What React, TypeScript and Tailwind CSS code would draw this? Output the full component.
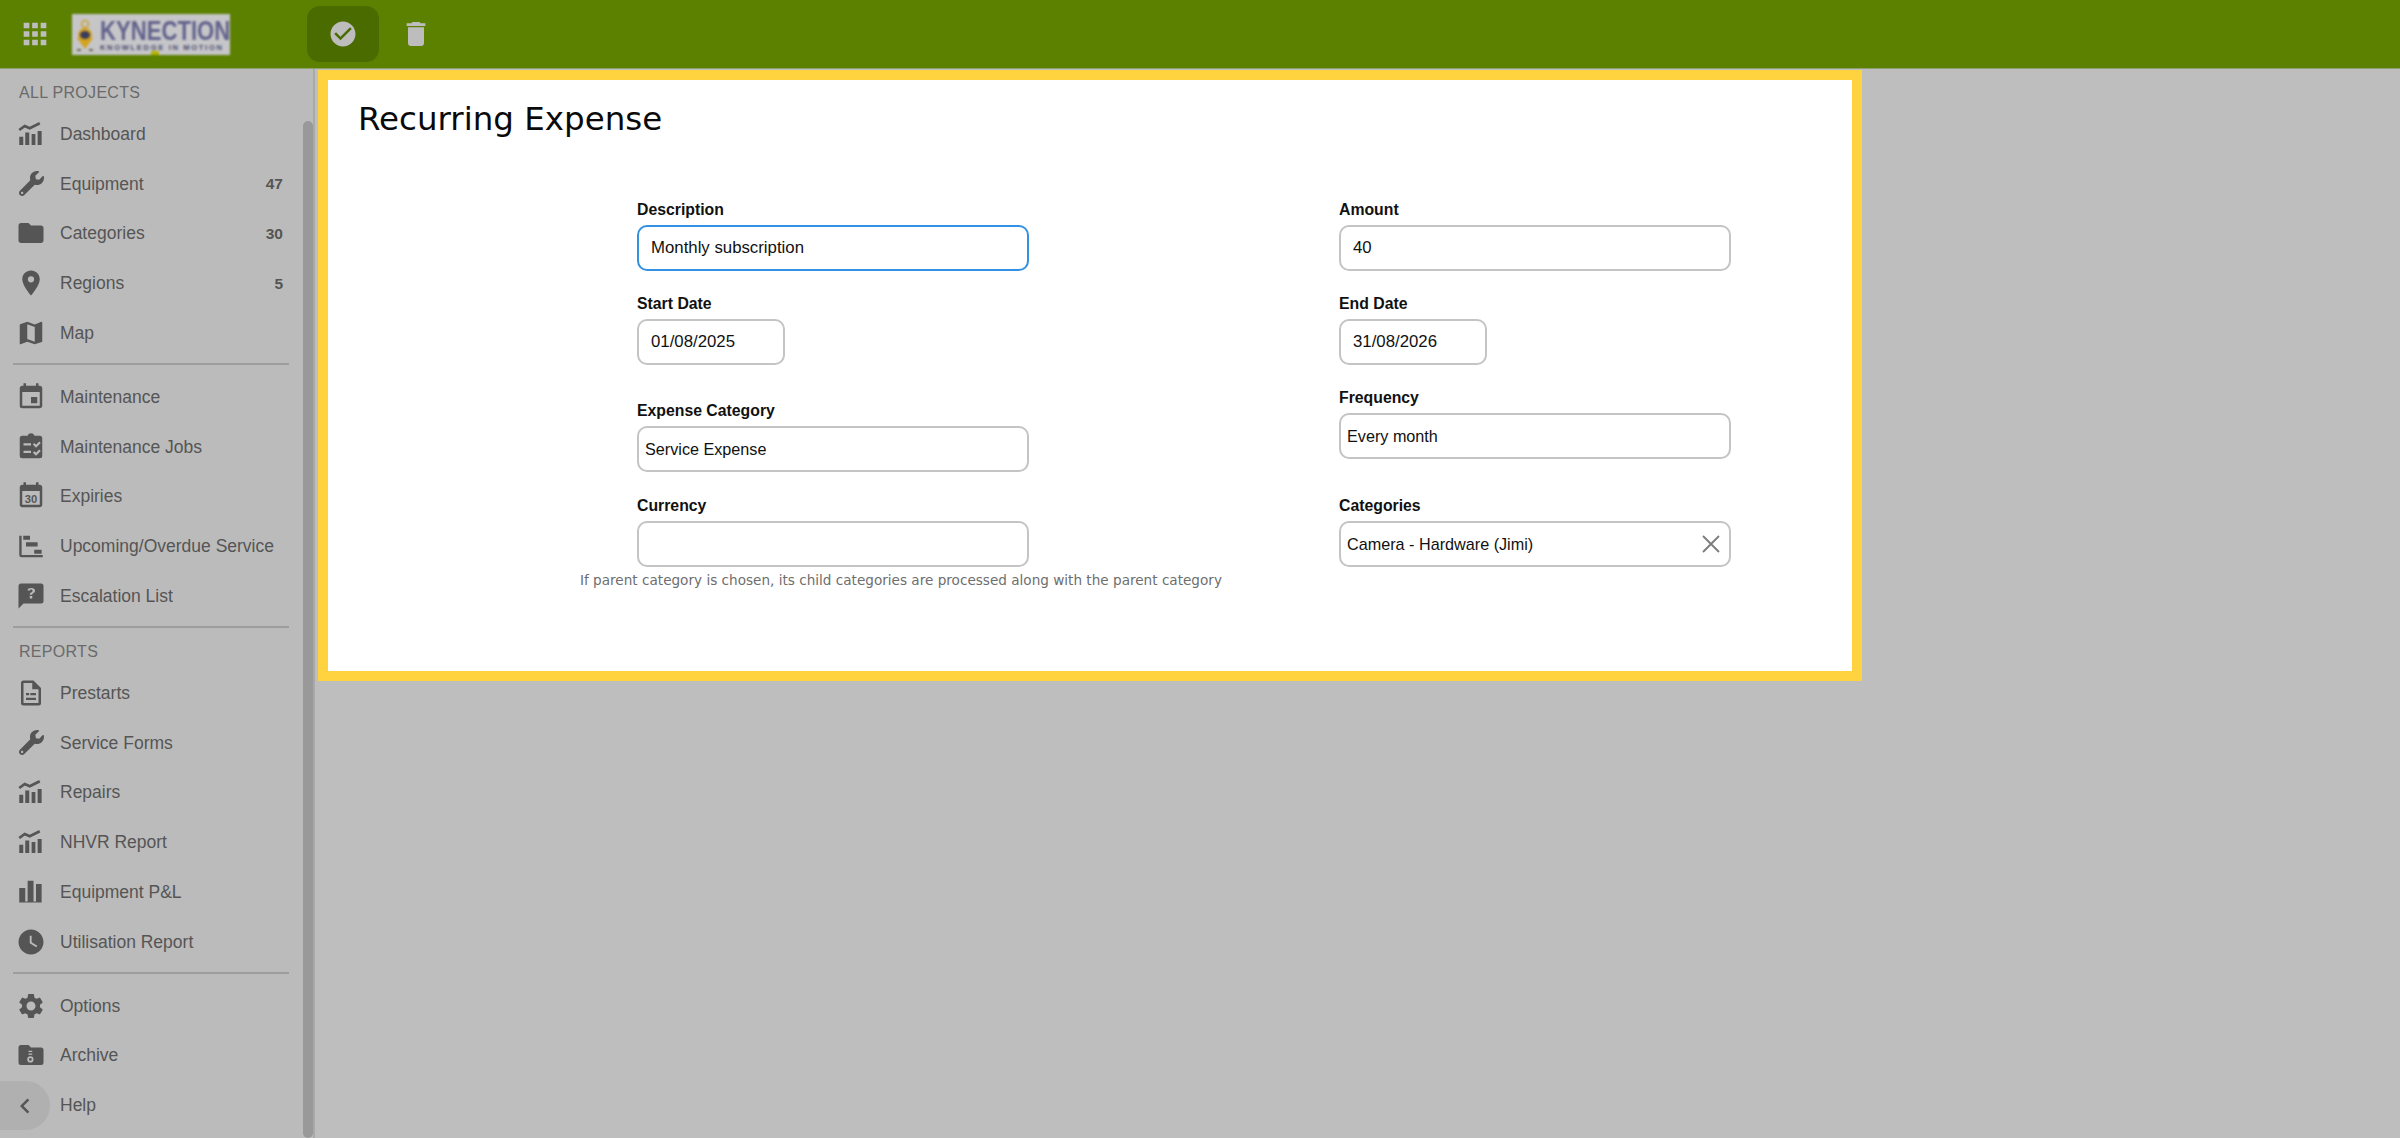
import React from "react";
import { MdApps, MdCheckCircle, MdDelete, MdFolder, MdPlace, MdMap, MdEvent, MdWatchLater, MdSettings, MdChevronLeft } from "react-icons/md";
import { FaWrench } from "react-icons/fa";

const S = ({ children }: { children: React.ReactNode }) => (
  <svg viewBox="0 0 24 24" width="30" height="30" fill="#555555" fillRule="evenodd">{children}</svg>
);

const Trend = () => (
  <S>
    <path d="M2.600 8.800 7 5.600l4 1.800 8-4" fill="none" stroke="#555555" strokeWidth="2.200" />
    <path d="M2.600 14.100h3.200v6.700H2.600zM7.400 10.700h3.200v10.100H7.400zM12.500 12h3v8.800h-3zM17.300 9.600h3.200v11.200h-3.200z" />
  </S>
);
const Jobs = () => (
  <S>
    <path d="M5 3h4.200a3 3 0 0 1 5.600 0H19a2 2 0 0 1 2 2v14a2 2 0 0 1-2 2H5a2 2 0 0 1-2-2V5a2 2 0 0 1 2-2zM6 9v1.800h6V9zM6 15v1.800h6V15zM13.500 10l1.200-1.200 1.300 1.300 2.600-2.600 1.200 1.200L16 12.500zM13.500 16.500l1.200-1.200 1.300 1.300 2.600-2.600 1.200 1.200-3.800 3.800z" />
  </S>
);
const Cal30 = () => (
  <S>
    <path d="M16 1v2H8V1H6v2H5c-1.110 0-1.990.9-1.990 2L3 19c0 1.100.89 2 2 2h14c1.100 0 2-.9 2-2V5c0-1.100-.9-2-2-2h-1V1h-2zm3 18H5V8h14v11z" />
    <text x="12" y="17.800" textAnchor="middle" fontSize="9" fontWeight="700" fontFamily="'Liberation Sans',sans-serif" fill="#555555">30</text>
  </S>
);
const Gantt = () => (
  <S>
    <path d="M2.600 3.700h1.900v15.500h16.900V21H4.500a1.900 1.900 0 0 1-1.900-1.900zM5.800 3.700h5.400V7H5.800zM8 9h9.300v3.300H8zM14.600 15h5.900v3.100h-5.900z" />
  </S>
);
const Esc = () => (
  <S>
    <path d="M4 2h16a2 2 0 0 1 2 2v12a2 2 0 0 1-2 2H6l-4 4V4c0-1.110.9-2 2-2zm7 10v2h2v-2zm1.190-6.500c-.89 0-1.600.18-2.140.54-.55.36-.83.96-.78 1.650h1.970c0-.28.1-.49.26-.63.2-.14.42-.21.69-.21.31 0 .58.08.76.26.18.17.27.39.27.69 0 .28-.08.53-.22.74-.17.22-.38.4-.64.54-.52.32-.86.6-1.070.84-.19.24-.29.58-.29 1.080h2c0-.28.05-.5.14-.68.09-.17.26-.32.52-.47.46-.21.84-.49 1.130-.85.29-.37.44-.76.44-1.200 0-.7-.27-1.260-.81-1.680-.54-.41-1.290-.62-2.230-.62z" />
  </S>
);
const Prestart = () => (
  <S>
    <path d="M6 2h8l6 6v12a2 2 0 0 1-2 2H6a2 2 0 0 1-2-2V4a2 2 0 0 1 2-2zm0 2v16h12V9h-5V4zM8 12h2.500v1.800H8zM11.500 12H16v1.800h-4.500zM8 15.800h8v1.800H8z" />
  </S>
);
const Bars = () => (
  <S>
    <path d="M2.600 8.800h4.800v11.500H2.600zM9.300 3H14v17.300H9.300zM16 5.600h4.500v14.700H16zM7.400 19.500h1.900v.8H7.400zM14 19.500h2v.8h-2z" />
  </S>
);
const Archive = () => (
  <S>
    <path d="M4 4h6l2 2h8a2 2 0 0 1 2 2v10a2 2 0 0 1-2 2H4a2 2 0 0 1-2-2V6a2 2 0 0 1 2-2zM10 8.500v1h3v-1zM10 10.800v1h3v-1zM11.500 13a2.500 2.500 0 1 0 0 5 2.500 2.500 0 0 0 0-5zm0 1.400a1.100 1.100 0 1 1 0 2.200 1.100 1.100 0 0 1 0-2.200z" />
  </S>
);

type Item = { icon: React.ReactNode; label: string; count?: string };
const mat = (C: React.ComponentType<{ size?: number; color?: string }>) => <C size={30} color="#555555" />;

const wrench = <FaWrench size={25} color="#555555" />;

const groups: { title?: string; items: Item[] }[] = [
  {
    title: "ALL PROJECTS",
    items: [
      { icon: <Trend />, label: "Dashboard" },
      { icon: wrench, label: "Equipment", count: "47" },
      { icon: mat(MdFolder), label: "Categories", count: "30" },
      { icon: mat(MdPlace), label: "Regions", count: "5" },
      { icon: mat(MdMap), label: "Map" },
    ],
  },
  {
    items: [
      { icon: mat(MdEvent), label: "Maintenance" },
      { icon: <Jobs />, label: "Maintenance Jobs" },
      { icon: <Cal30 />, label: "Expiries" },
      { icon: <Gantt />, label: "Upcoming/Overdue Service" },
      { icon: <Esc />, label: "Escalation List" },
    ],
  },
  {
    title: "REPORTS",
    items: [
      { icon: <Prestart />, label: "Prestarts" },
      { icon: wrench, label: "Service Forms" },
      { icon: <Trend />, label: "Repairs" },
      { icon: <Trend />, label: "NHVR Report" },
      { icon: <Bars />, label: "Equipment P&L" },
      { icon: mat(MdWatchLater), label: "Utilisation Report" },
    ],
  },
  {
    items: [
      { icon: mat(MdSettings), label: "Options" },
      { icon: <Archive />, label: "Archive" },
      { icon: <span className="w-[30px] h-[30px]" />, label: "Help" },
    ],
  },
];

function Row({ item }: { item: Item }) {
  return (
    <div className="flex items-center h-[49.8px] pl-[16px] pr-[30px]">
      <span className="w-[30px] h-[30px] flex items-center justify-center shrink-0">{item.icon}</span>
      <span className="ml-[14px] flex-1 text-[17.5px] text-[#555555]">{item.label}</span>
      {item.count && <span className="text-[15.500px] font-bold text-[#555555]">{item.count}</span>}
    </div>
  );
}

function Field({ label, value, className = "", pad = "pl-[12px]", text = "text-[16.800px]", focus, children }: { label: string; value?: string; className?: string; pad?: string; text?: string; focus?: boolean; children?: React.ReactNode }) {
  return (
    <div className={`flex flex-col ${className}`}>
      <label className="h-[22px] mb-[4px] leading-[22px] text-[15.800px] font-bold text-[#111111]">{label}</label>
      <div className={`flex items-center justify-between h-[46px] rounded-[10px] border-2 bg-white text-[#111111] ${text} ${pad} ${focus ? "border-[#3391e3]" : "border-[#c4c4c4]"}`}>
        <span>{value}</span>
        {children}
      </div>
    </div>
  );
}

export default function App() {
  return (
    <div className="w-[2400px] h-[1138px] overflow-hidden flex flex-col bg-[#bebebe] font-['Liberation_Sans',Arial,sans-serif]">
      <header className="h-[69px] shrink-0 bg-[#5c8000] border-b border-b-[#8f9f70] flex items-center">
        <div className="w-[70px] flex justify-center"><MdApps size={34} color="#bdbdbd" /></div>
        <div className="relative ml-[2px] w-[158px] h-[41px] bg-[#c6c6c9] flex items-center blur-[1px]">
          <svg viewBox="0 0 28 40" width="28" height="40" className="shrink-0">
            <circle cx="13" cy="10" r="3.500" fill="none" stroke="#c8a030" strokeWidth="1.500" />
            <path d="M5 24h16l-8 11z" fill="#d3a21e" />
            <circle cx="13" cy="21" r="7" fill="#d3a21e" />
            <ellipse cx="13" cy="21" rx="5" ry="4" fill="#3c3c5c" />
            <path d="M5 36h4M17 36h4" stroke="#6a6a4a" strokeWidth="2" />
          </svg>
          <div className="flex flex-col leading-none w-[130px]">
            <span className="origin-left scale-x-[0.79] text-[28px] font-bold text-[#62628c] leading-[27px] whitespace-nowrap">KYNECTION</span>
            <span className="text-[7.500px] font-bold tracking-[1.700px] text-[#4d4d70] whitespace-nowrap">KNOWLEDGE IN MOTION</span>
          </div>
          <span className="absolute left-[79px] bottom-0 w-[8px] h-[4px] bg-[#b4b400]" />
        </div>
        <div className="ml-[77px] w-[72px] h-[56px] rounded-[13px] bg-[#4a6b00] flex items-center justify-center">
          <MdCheckCircle size={30} color="#bdbdbd" />
        </div>
        <div className="ml-[21px] w-[32px] flex justify-center"><MdDelete size={34} color="#bdbdbd" /></div>
      </header>

      <div className="flex flex-1 min-h-0">
        <aside className="relative w-[315px] shrink-0 bg-[#bbbbbb] border-r-2 border-r-[#a9a9a9] overflow-hidden">
          {groups.map((g, i) => (
            <div key={i}>
              {i > 0 && <div className="ml-[13px] mr-[24px] border-t-2 border-t-[#9d9d9d]" />}
              {g.title && (
                <div className="pl-[19px] pt-[14px] pb-[6px] text-[16px] leading-[20px] tracking-[0.3px] text-[#6a6a6a]">{g.title}</div>
              )}
              <div className={g.title ? "" : i === 1 ? "pt-[7px]" : "pt-[7px]"}>
                {g.items.map((it) => (
                  <Row key={it.label} item={it} />
                ))}
              </div>
              {i < groups.length - 1 && <div className="h-[5px]" />}
            </div>
          ))}
          <div className="absolute left-0 top-[1012px] w-[50px] h-[49px] rounded-r-full bg-[#b0b0b0] flex items-center justify-center">
            <MdChevronLeft size={30} color="#555555" />
          </div>
          <div className="absolute left-[303px] top-[52px] bottom-0 w-[10px] rounded-full bg-[#999999]" />
        </aside>

        <main className="flex-1 min-w-0 pl-[3px] pt-[1px]">
          <section className="w-[1544px] h-[611px] border-[10px] border-[#ffd23f] bg-white">
            <h1 className="pl-[30px] pt-[15px] h-[114px] text-[32.500px] leading-[48px] text-[#0a0a0a] font-['DejaVu_Sans',Verdana,sans-serif]">Recurring Expense</h1>
            <div className="flex pl-[309px] gap-[310px]">
              <div className="w-[392px] flex flex-col">
                <Field label="Description" value="Monthly subscription" focus className="pt-[5px]" />
                <Field label="Start Date" value="01/08/2025" className="w-[148px] mt-[22px]" />
                <Field label="Expense Category" value="Service Expense" pad="pl-[6px]" text="text-[16.200px]" className="mt-[35px]" />
                <Field label="Currency" className="mt-[23px]" />
                <p className="mt-[5px] -ml-[57px] w-[700px] text-[13.600px] leading-[16px] text-[#6e6e6e] font-['DejaVu_Sans',Verdana,sans-serif]">If parent category is chosen, its child categories are processed along with the parent category</p>
              </div>
              <div className="w-[392px] flex flex-col">
                <Field label="Amount" value="40" className="pt-[5px]" />
                <Field label="End Date" value="31/08/2026" className="w-[148px] mt-[22px]" />
                <Field label="Frequency" value="Every month" pad="pl-[6px]" text="text-[16.200px]" className="mt-[22px]" />
                <Field label="Categories" value="Camera - Hardware (Jimi)" pad="pl-[6px] pr-[8px]" text="text-[16.200px]" className="mt-[36px]">
                  <svg viewBox="0 0 20 20" width="20" height="20" stroke="#7b7b7b" strokeWidth="1.800" fill="none"><path d="M2 2l16 16M18 2 2 18" /></svg>
                </Field>
              </div>
            </div>
          </section>
        </main>
      </div>
    </div>
  );
}
